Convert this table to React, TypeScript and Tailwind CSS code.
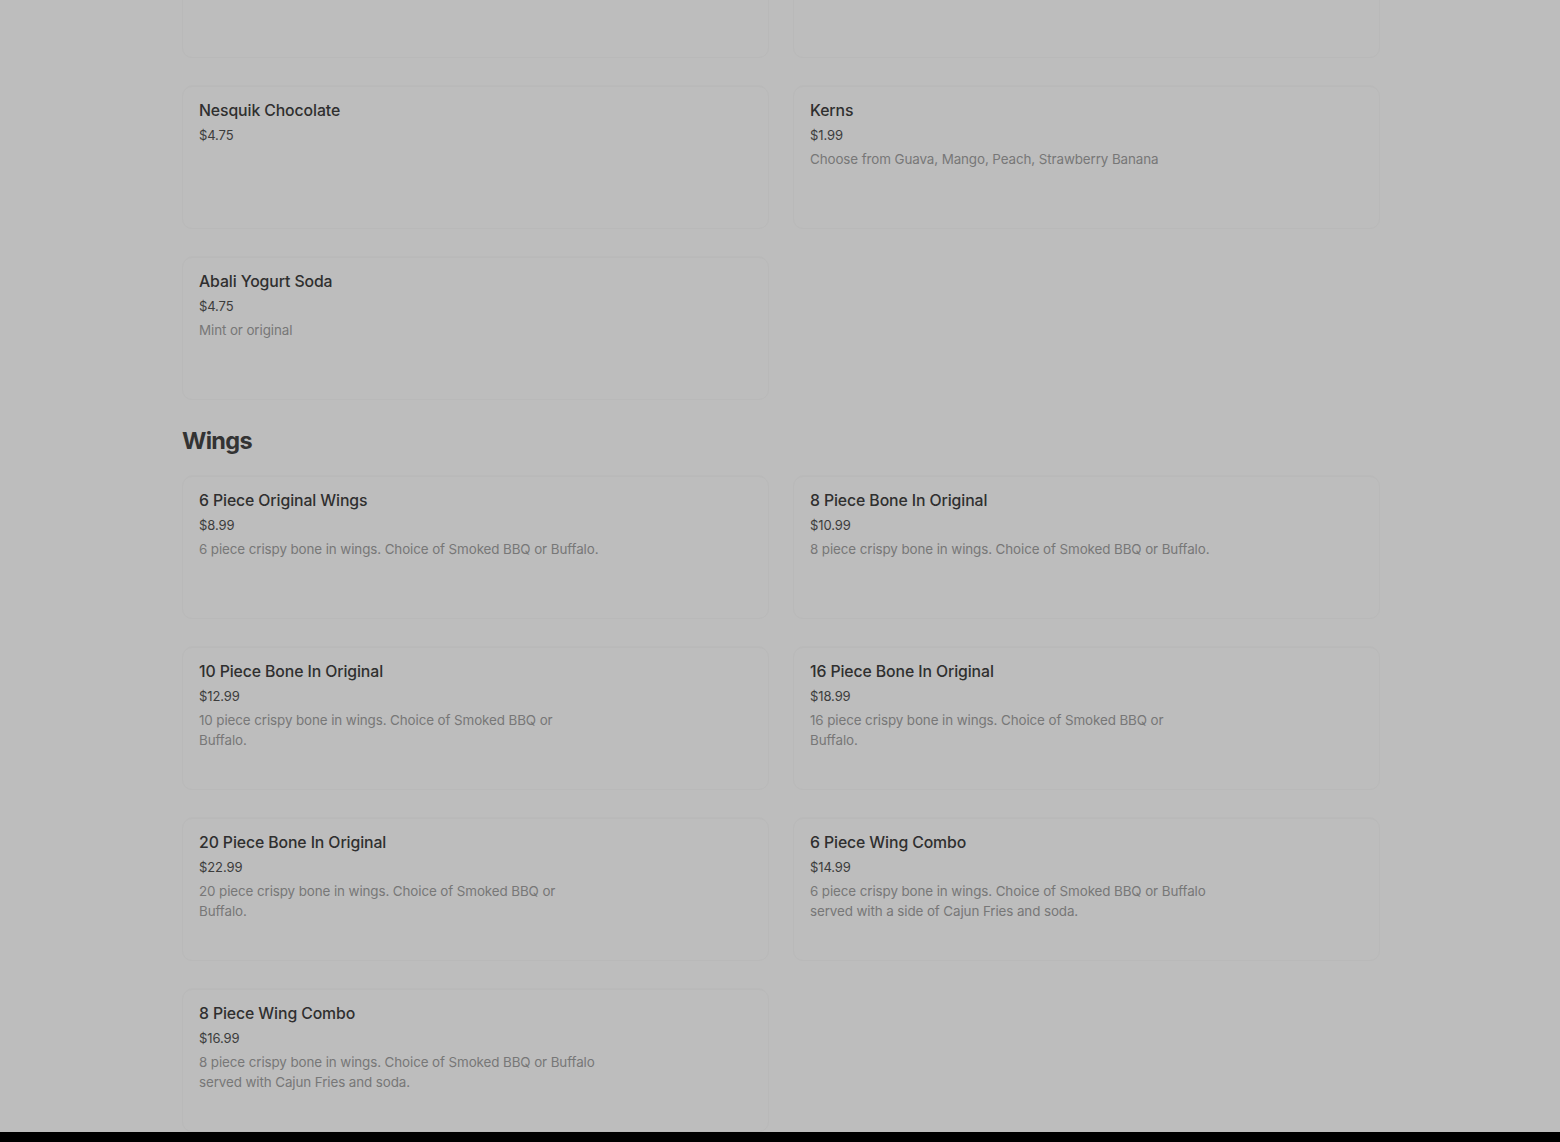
import type { ReactNode } from "react";

type MenuItem = {
  name?: string;
  price?: string;
  description?: string;
};

const drinks: MenuItem[] = [
  {},
  {},
  { name: "Nesquik Chocolate", price: "$4.75" },
  {
    name: "Kerns",
    price: "$1.99",
    description: "Choose from Guava, Mango, Peach, Strawberry Banana",
  },
  { name: "Abali Yogurt Soda", price: "$4.75", description: "Mint or original" },
];

const wings: MenuItem[] = [
  {
    name: "6 Piece Original Wings",
    price: "$8.99",
    description: "6 piece crispy bone in wings. Choice of Smoked BBQ or Buffalo.",
  },
  {
    name: "8 Piece Bone In Original",
    price: "$10.99",
    description: "8 piece crispy bone in wings. Choice of Smoked BBQ or Buffalo.",
  },
  {
    name: "10 Piece Bone In Original",
    price: "$12.99",
    description: "10 piece crispy bone in wings. Choice of Smoked BBQ or Buffalo.",
  },
  {
    name: "16 Piece Bone In Original",
    price: "$18.99",
    description: "16 piece crispy bone in wings. Choice of Smoked BBQ or Buffalo.",
  },
  {
    name: "20 Piece Bone In Original",
    price: "$22.99",
    description: "20 piece crispy bone in wings. Choice of Smoked BBQ or Buffalo.",
  },
  {
    name: "6 Piece Wing Combo",
    price: "$14.99",
    description:
      "6 piece crispy bone in wings. Choice of Smoked BBQ or Buffalo served with a side of Cajun Fries and soda.",
  },
  {
    name: "8 Piece Wing Combo",
    price: "$16.99",
    description:
      "8 piece crispy bone in wings. Choice of Smoked BBQ or Buffalo served with Cajun Fries and soda.",
  },
];

function MenuCard({ item }: { item: MenuItem }) {
  return (
    <div className="h-[143px] rounded-[10px] border border-[#b9b9b9] bg-[#bdbdbd] px-4 pt-[14px] shadow-[0_-4px_0_-3px_#bababa]">
      {item.name ? (
        <div className="max-w-[402px]">
          <div className="text-[15.8px] font-medium leading-5 tracking-[-0.1px] text-[#2f2f2f]">
            {item.name}
          </div>
          <div className="mt-1 text-[13px] leading-5 tracking-[-0.1px] text-[#3c3c3c]">
            {item.price}
          </div>
          {item.description ? (
            <p className="mt-1 text-[13.4px] leading-5 tracking-[-0.1px] text-[#777777]">
              {item.description}
            </p>
          ) : null}
        </div>
      ) : null}
    </div>
  );
}

function MenuGrid({ children }: { children: ReactNode }) {
  return <div className="grid grid-cols-2 gap-x-6 gap-y-[28px]">{children}</div>;
}

export default function App() {
  return (
    <div
      className="flex h-[1142px] flex-col overflow-hidden bg-[#bdbdbd]"
      style={{ fontFamily: "Inter, 'Noto Sans', sans-serif" }}
    >
      <main className="min-h-0 flex-1 overflow-hidden">
        <div className="-mt-[85px] ml-[182px] w-[1198px]">
          <MenuGrid>
            {drinks.map((item, i) => (
              <MenuCard key={i} item={item} />
            ))}
          </MenuGrid>

          <h2 className="mt-[27px] mb-[21px] text-[23.5px] font-bold leading-7 tracking-[-0.7px] text-[#333333]">
            Wings
          </h2>

          <MenuGrid>
            {wings.map((item) => (
              <MenuCard key={item.name} item={item} />
            ))}
          </MenuGrid>
        </div>
      </main>
      <div className="h-[10px] shrink-0 bg-black" />
    </div>
  );
}
